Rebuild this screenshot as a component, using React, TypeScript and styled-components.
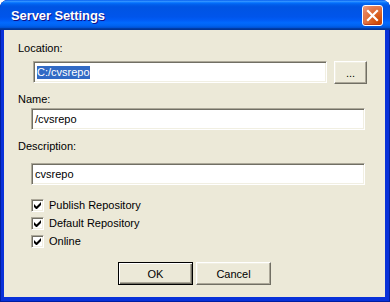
import React from 'react';
import styled, { createGlobalStyle } from 'styled-components';

const GlobalStyle = createGlobalStyle`
    html, body {
        margin: 0;
        padding: 0;
        background: #ffffff;
    }
    body {
        font-family: 'Liberation Sans', Arial, sans-serif;
        font-size: 11px;
        color: #000000;
    }
`;

const Window = styled.div`
    width: 390px;
    height: 302px;
    display: flex;
    flex-direction: column;
    background: #0831d9;
    border-radius: 8px 8px 0 0;
    overflow: hidden;
    box-shadow: inset -1px -1px #001ea0, inset 1px 0 #001ea0;
`;

const TitleBar = styled.div`
    height: 30px;
    flex: none;
    display: flex;
    align-items: center;
    justify-content: space-between;
    padding: 0 7px 0 11px;
    box-sizing: border-box;
    background: linear-gradient(
        to bottom,
        #0058ee 0%,
        #3593ff 4%,
        #288eff 6%,
        #127dff 8%,
        #036ffc 10%,
        #0262ee 14%,
        #0057e5 20%,
        #0054e3 24%,
        #0055eb 56%,
        #005bf5 66%,
        #026afe 76%,
        #0062ef 86%,
        #0052d6 92%,
        #0040ab 94%,
        #003092 100%
    );
`;

const Title = styled.span`
    font-family: 'Liberation Sans', Arial, sans-serif;
    font-weight: bold;
    font-size: 13px;
    color: #ffffff;
    text-shadow: 1px 1px #0f1089;
    letter-spacing: -0.1px;
    margin-top: 1px;
`;

const CloseButton = styled.button`
    width: 21px;
    height: 21px;
    padding: 0;
    margin-top: 1px;
    border: 1px solid #ffffff;
    border-radius: 3px;
    display: flex;
    align-items: center;
    justify-content: center;
    background: radial-gradient(
        circle at 85% 85%,
        #cc4600 0%,
        #dc6527 40%,
        #e5805a 75%,
        #f0a285 100%
    );
    box-shadow: inset 0 -1px 1px #b8381a;
`;

const Body = styled.div`
    flex: 1;
    margin: 0 5px 5px 4px;
    background: #ece9d8;
    padding: 12px 0 0 14px;
    display: flex;
    flex-direction: column;
    align-items: flex-start;
`;

const Label = styled.div<{ $gap: number }>`
    line-height: 13px;
    margin-top: ${(p) => p.$gap}px;
`;

const Row = styled.div`
    display: flex;
    gap: 7px;
    margin-top: 6px;
    margin-left: 15px;
`;

const TextBox = styled.div<{ $width: number; $gap?: number; $indent?: number }>`
    width: ${(p) => p.$width}px;
    height: 22px;
    box-sizing: border-box;
    margin-top: ${(p) => p.$gap ?? 0}px;
    margin-left: ${(p) => p.$indent ?? 0}px;
    background: #ffffff;
    border: 1px solid;
    border-color: #aca899 #ffffff #ffffff #aca899;
    box-shadow: inset 1px 1px #716f64, inset -1px -1px #f1efe2;
    display: flex;
    align-items: center;
    padding: 0 3px;
    line-height: 13px;
`;

const Selected = styled.span`
    background: #316ac5;
    color: #ffffff;
`;

const PushButton = styled.button<{ $default?: boolean; $width: number }>`
    width: ${(p) => p.$width}px;
    height: 23px;
    box-sizing: border-box;
    padding: 0;
    font-family: 'Liberation Sans', Arial, sans-serif;
    font-size: 11px;
    color: #000000;
    background: #ece9d8;
    border: 1px solid;
    border-color: ${(p) => (p.$default ? '#000000' : '#ffffff #716f64 #716f64 #ffffff')};
    box-shadow: ${(p) =>
        p.$default
            ? 'inset 1px 1px #ffffff, inset -1px -1px #716f64, inset -2px -2px #aca899'
            : 'inset -1px -1px #aca899, inset 1px 1px #f1efe2'};
`;

const CheckList = styled.div`
    display: flex;
    flex-direction: column;
    gap: 5px;
    margin-top: 14px;
    margin-left: 13px;
`;

const CheckRow = styled.label`
    display: flex;
    align-items: center;
    gap: 5px;
    height: 13px;
    line-height: 13px;
`;

const CheckBox = styled.span`
    width: 13px;
    height: 13px;
    box-sizing: border-box;
    background: #ffffff;
    border: 1px solid;
    border-color: #aca899 #ffffff #ffffff #aca899;
    box-shadow: inset 1px 1px #716f64, inset -1px -1px #f1efe2;
    display: flex;
    align-items: center;
    justify-content: center;
`;

const ButtonRow = styled.div`
    align-self: stretch;
    display: flex;
    justify-content: center;
    gap: 3px;
    margin-top: 14px;
    padding-right: 14px;
`;

const Check = () => (
    <svg width="7" height="7" viewBox="0 0 7 7">
        <path d="M0 2v3l2 2h1l4-4V0L2.5 4.5z" fill="#000" />
    </svg>
);

const checks = ['Publish Repository', 'Default Repository', 'Online'];

const App = () => {
    return (
        <>
            <GlobalStyle />
            <Window>
                <TitleBar>
                    <Title>Server Settings</Title>
                    <CloseButton title="close">
                        <svg width="13" height="13" viewBox="0 0 13 13">
                            <path
                                d="M2 2l9 9M11 2l-9 9"
                                stroke="#ffffff"
                                strokeWidth="2.2"
                                strokeLinecap="square"
                            />
                        </svg>
                    </CloseButton>
                </TitleBar>
                <Body>
                    <Label $gap={0}>Location:</Label>
                    <Row>
                        <TextBox $width={294}>
                            <Selected>C:/cvsrepo</Selected>
                        </TextBox>
                        <PushButton $width={33}>...</PushButton>
                    </Row>
                    <Label $gap={9}>Name:</Label>
                    <TextBox $width={334} $gap={2} $indent={13}>
                        /cvsrepo
                    </TextBox>
                    <Label $gap={10}>Description:</Label>
                    <TextBox $width={334} $gap={10} $indent={13}>
                        cvsrepo
                    </TextBox>
                    <CheckList>
                        {checks.map((c) => (
                            <CheckRow key={c}>
                                <CheckBox>
                                    <Check />
                                </CheckBox>
                                {c}
                            </CheckRow>
                        ))}
                    </CheckList>
                    <ButtonRow>
                        <PushButton $default $width={75}>
                            OK
                        </PushButton>
                        <PushButton $width={75}>Cancel</PushButton>
                    </ButtonRow>
                </Body>
            </Window>
        </>
    );
};

export default App;
